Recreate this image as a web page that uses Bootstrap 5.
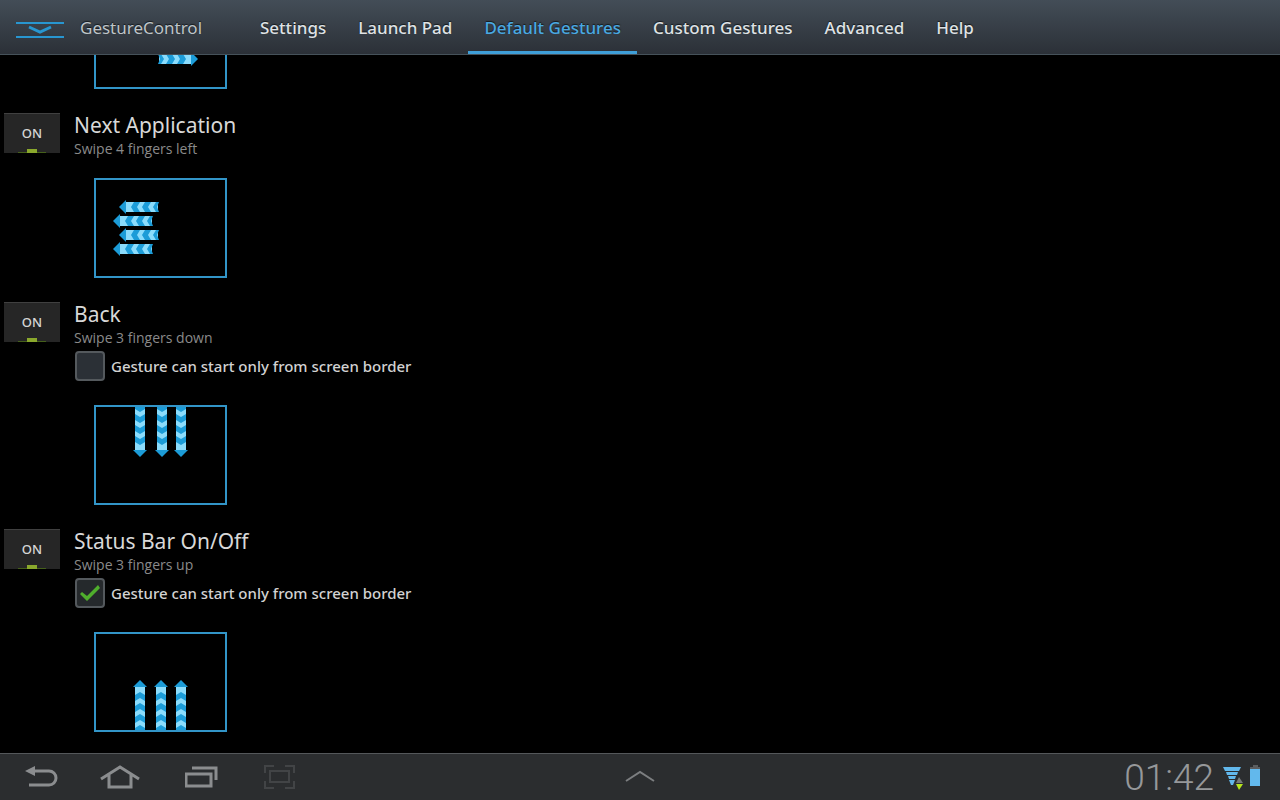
<!DOCTYPE html>
<html lang="en">
<head>
<meta charset="utf-8">
<meta name="viewport" content="width=device-width, initial-scale=1">
<title>GestureControl</title>
<link href="https://cdn.jsdelivr.net/npm/bootstrap@5.3.0/dist/css/bootstrap.min.css" rel="stylesheet">
<style>
  body { background: #000; color: #d2d2d2; font-family: "Noto Sans", sans-serif; }
  .topbar { height: 55px; background: linear-gradient(#434d57, #2b3037); border-bottom: 1px solid #46525a; text-shadow: 0 -1px 1px #14181c; }
  .brand-name { font-size: 17px; line-height: 24px; color: #bfc5c9; width: 164px; margin: 2px 0 0 16px; flex-shrink: 0; }
  .tabs .nav-link { font-size: 17px; font-weight: 500; line-height: 24px; padding: 16px 16px 11px; color: #dfe2e5; border-bottom: 3px solid transparent; }
  .tabs .nav-link.active { color: #4aa9e2; border-color: #3f9fd8; }
  .gestures { gap: 24px; padding: 0 4px 21px; }
  .gesture { gap: 14px; }
  .toggle { width: 56px; height: 40px; background: #262626; border: 0; border-top: 1px solid #404040; color: #d6d6d6; font-size: 13px; font-weight: 500; padding: 0; position: relative; }
  .toggle::after { content: ""; position: absolute; left: 23px; bottom: 0; width: 10px; height: 4px; background: #8aa82c; }
  .toggle::before { content: ""; position: absolute; left: 14px; right: 14px; bottom: 0; height: 1px; background: #45601a; }
  .title-text { font-size: 21px; line-height: 24px; font-weight: 400; color: #d8d8d8; }
  .hint { font-family: "Open Sans", sans-serif; font-size: 14px; line-height: 24px; padding-bottom: 1px; color: #8a8a8a; }
  .opt { height: 38px; gap: 6px; padding: 0 0 8px 1px; font-size: 15px; font-weight: 500; }
  .opt .form-check-input { width: 30px; height: 30px; margin: 0; border: 2px solid #54595d; border-radius: 4px; background-color: #2b3036; }
  .opt .form-check-input:checked { background-color: #25292c; background-size: 26px; background-image: url("data:image/svg+xml,%3Csvg xmlns='http://www.w3.org/2000/svg' viewBox='0 0 26 26'%3E%3Cpath d='M3 14l2-2 5 4L21 5l2 3L10 21z' fill='%234fae2c'/%3E%3C/svg%3E"); }
  .preview { margin: 16px 0 0 20px; display: block; }
  .sysbar { height: 47px; background: #2b2d2f; border-top: 1px solid #54575a; }
  .sysbar .side { flex: 1 1 0; }
  .sysbar button { background: none; border: 0; padding: 0; width: 80px; height: 46px; }
  .sysbar button svg { display: block; margin: auto; }
  .clock { font: 300 37px/46px Roboto, sans-serif; color: #96989a; padding-top: 2px; }
  .status-icons { margin: 0 19px 0 9px; }
</style>
</head>
<body>
<svg width="0" height="0" class="position-absolute" aria-hidden="true">
  <defs>
    <!-- upward arrows with the tip at 0,0 -->
    <g id="stripes">
      <path d="M-5 15l5-3 5 3v6l-5-3-5 3zM-5 26l5-3 5 3v6l-5-3-5 3z" fill="#1c9cd8"/>
      <path d="M-7 7L0 0 7 7z" fill="#1c9cd8"/>
    </g>
    <g id="arrow-long">
      <path d="M-5 6H5V50H-5z" fill="#8bdcfc"/>
      <use href="#stripes"/>
      <path d="M-5 37l5-3 5 3v6l-5-3-5 3zM-5 48l5-3 5 3v2H-5z" fill="#1c9cd8"/>
    </g>
    <g id="arrow-short">
      <path d="M-5 6H5V39H-5z" fill="#8bdcfc"/>
      <use href="#stripes"/>
      <path d="M-5 37l5-3 5 3v3l-5-2-5 2z" fill="#1c9cd8"/>
    </g>
    <path id="frame" d="M1 1H132V99H1z" fill="none" stroke="#3295c8" stroke-width="2"/>
  </defs>
</svg>
<div class="d-flex flex-column vh-100 overflow-hidden">
  <header class="topbar d-flex align-items-center flex-shrink-0 ps-3">
    <svg width="48" height="18" viewBox="0 0 48 18" fill="none" stroke="#2896d0" stroke-width="2" class="flex-shrink-0 mt-1"><path d="M0 3H48M0 17H48"/><path d="M13 7l11 5 11-5" stroke-width="3"/></svg>
    <span class="brand-name">GestureControl</span>
    <nav class="nav tabs flex-nowrap text-nowrap">
      <a class="nav-link" href="#">Settings</a>
      <a class="nav-link" href="#">Launch Pad</a>
      <a class="nav-link active" href="#" aria-current="page">Default Gestures</a>
      <a class="nav-link" href="#">Custom Gestures</a>
      <a class="nav-link" href="#">Advanced</a>
      <a class="nav-link" href="#">Help</a>
    </nav>
  </header>

  <main class="gestures flex-grow-1 d-flex flex-column justify-content-end overflow-hidden">
    <section class="gesture d-flex">
      <div class="toggle invisible"></div>
      <svg class="preview" width="133" height="100"><use href="#frame"/>
        <use href="#arrow-short" transform="translate(104 28) rotate(90)"/>
        <use href="#arrow-short" transform="translate(110 42) rotate(90)"/>
        <use href="#arrow-short" transform="translate(110 56) rotate(90)"/>
        <use href="#arrow-short" transform="translate(104 70) rotate(90)"/>
      </svg>
    </section>

    <section class="gesture d-flex align-items-start">
      <button type="button" class="toggle" aria-pressed="true">ON</button>
      <div>
        <h2 class="title-text m-0">Next Application</h2>
        <p class="hint m-0">Swipe 4 fingers left</p>
        <svg class="preview" width="133" height="100"><use href="#frame"/>
          <use href="#arrow-short" transform="translate(25 29) rotate(-90)"/>
          <use href="#arrow-short" transform="translate(19 43) rotate(-90)"/>
          <use href="#arrow-short" transform="translate(25 57) rotate(-90)"/>
          <use href="#arrow-short" transform="translate(19 71) rotate(-90)"/>
        </svg>
      </div>
    </section>

    <section class="gesture d-flex align-items-start">
      <button type="button" class="toggle" aria-pressed="true">ON</button>
      <div>
        <h2 class="title-text m-0">Back</h2>
        <p class="hint m-0">Swipe 3 fingers down</p>
        <div class="opt d-flex align-items-center">
          <input class="form-check-input" type="checkbox" id="border-back">
          <label for="border-back">Gesture can start only from screen border</label>
        </div>
        <svg class="preview" width="133" height="100"><use href="#frame"/>
          <use href="#arrow-long" transform="translate(46 52) rotate(180)"/>
          <use href="#arrow-long" transform="translate(68 52) rotate(180)"/>
          <use href="#arrow-long" transform="translate(87 52) rotate(180)"/>
        </svg>
      </div>
    </section>

    <section class="gesture d-flex align-items-start">
      <button type="button" class="toggle" aria-pressed="true">ON</button>
      <div>
        <h2 class="title-text m-0">Status Bar On/Off</h2>
        <p class="hint m-0">Swipe 3 fingers up</p>
        <div class="opt d-flex align-items-center">
          <input class="form-check-input" type="checkbox" id="border-status" checked>
          <label for="border-status">Gesture can start only from screen border</label>
        </div>
        <svg class="preview" width="133" height="100"><use href="#frame"/>
          <use href="#arrow-long" transform="translate(46 48)"/>
          <use href="#arrow-long" transform="translate(67 48)"/>
          <use href="#arrow-long" transform="translate(87 48)"/>
        </svg>
      </div>
    </section>
  </main>

  <footer class="sysbar d-flex align-items-center flex-shrink-0">
    <div class="side d-flex">
      <button type="button" class="ps-1" aria-label="Back"><svg width="34" height="26" viewBox="0 0 34 26"><path d="M9 7H24a7 7 0 0 1 0 14H4" fill="none" stroke="#8b8d8f" stroke-width="3"/><path d="M0 7L10 2V12z" fill="#8b8d8f"/></svg></button>
      <button type="button" aria-label="Home"><svg width="40" height="26" viewBox="0 0 40 26" fill="none" stroke="#8b8d8f" stroke-width="3"><path d="M1 15L20 3 39 15M9 11V23H31V11"/></svg></button>
      <button type="button" class="ps-1" aria-label="Recent apps"><svg width="34" height="26" viewBox="0 0 34 26" fill="none" stroke="#8b8d8f" stroke-width="3"><path d="M1 10H26V22H1z"/><path d="M7 4H31V16"/></svg></button>
      <button type="button" aria-label="Screenshot"><svg width="32" height="26" viewBox="0 0 32 26" fill="none" stroke="#424446" stroke-width="2"><path d="M6 7H25V18H6z"/><path d="M1 9V2H10M21 2H30V9M1 17V24H10M21 24H30V17"/></svg></button>
    </div>
    <button type="button" aria-label="Open tray"><svg width="30" height="14" viewBox="0 0 30 14" fill="none" stroke="#7c7e80" stroke-width="2"><path d="M1 11L15 2 29 11"/></svg></button>
    <div class="side d-flex align-items-center">
      <span class="clock ms-auto">01:42</span>
      <svg class="status-icons" width="38" height="28" viewBox="0 0 38 28">
        <path d="M0 4H18L16 8H2zM3 9H15L14 12H4zM5 13H13L12 16H6zM6 17H12L10 22H8z" fill="#62b8ec"/>
        <path d="M13 20L16 14 20 20z" fill="#77797a"/><path d="M13 21H20L16 27z" fill="#b6e61c"/>
        <path d="M30 2H35V5H30z" fill="#5b5d5f"/><path d="M27 5H37V23H27z" fill="#62b8ec"/><path d="M27 4H37V6H27z" fill="#5b5d5f"/>
      </svg>
    </div>
  </footer>
</div>
<script src="https://cdn.jsdelivr.net/npm/bootstrap@5.3.0/dist/js/bootstrap.bundle.min.js"></script>
</body>
</html>
